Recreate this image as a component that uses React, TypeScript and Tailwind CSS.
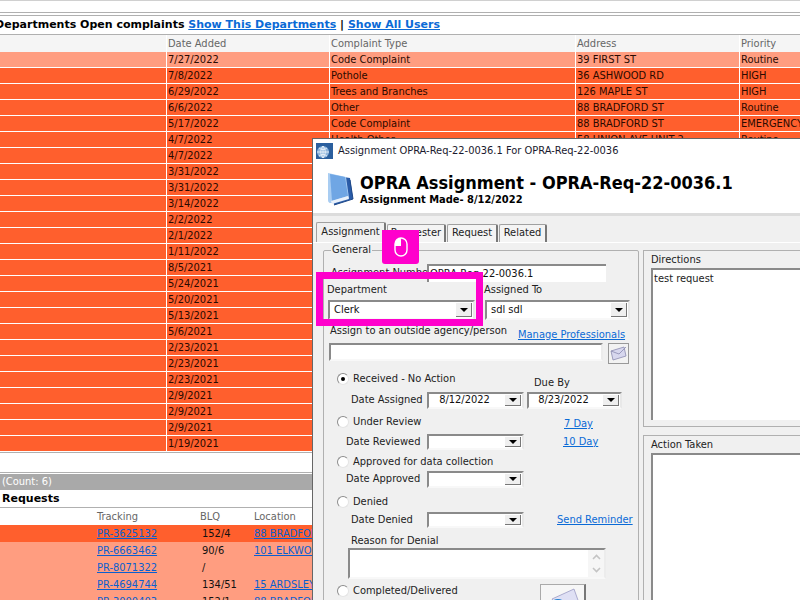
const complaints = [
  ["7/27/2022", "Code Complaint", "39 FIRST ST", "Routine"],
  ["7/8/2022", "Pothole", "36 ASHWOOD RD", "HIGH"],
  ["6/29/2022", "Trees and Branches", "126 MAPLE ST", "HIGH"],
  ["6/6/2022", "Other", "88 BRADFORD ST", "Routine"],
  ["5/17/2022", "Code Complaint", "88 BRADFORD ST", "EMERGENCY"],
  ["4/7/2022", "Health Other", "58 UNION AVE UNIT 2", "Routine"],
  ["4/7/2022", "", "", ""],
  ["3/31/2022", "", "", ""],
  ["3/31/2022", "", "", ""],
  ["3/14/2022", "", "", ""],
  ["2/2/2022", "", "", ""],
  ["2/1/2022", "", "", ""],
  ["1/11/2022", "", "", ""],
  ["8/5/2021", "", "", ""],
  ["5/24/2021", "", "", ""],
  ["5/20/2021", "", "", ""],
  ["5/13/2021", "", "", ""],
  ["5/6/2021", "", "", ""],
  ["2/23/2021", "", "", ""],
  ["2/23/2021", "", "", ""],
  ["2/23/2021", "", "", ""],
  ["2/9/2021", "", "", ""],
  ["2/9/2021", "", "", ""],
  ["2/9/2021", "", "", ""],
  ["1/19/2021", "", "", ""],
];

const requests = [
  ["PR-3625132", "152/4", "88 BRADFORD ST"],
  ["PR-6663462", "90/6", "101 ELKWOOD AVE"],
  ["PR-8071322", "/", ""],
  ["PR-4694744", "134/51", "15 ARDSLEY RD"],
  ["PR-3000403", "152/1", "88 BRADFORD ST"],
];

function Dropdown({ value, className, center }: { value?: string; className: string; center?: boolean }) {
  return (
    <div className={`flex items-stretch bg-white border-2 border-[#8a8a8a] border-r-[#e8e8e8] border-b-[#f8f8f8] ${className}`}>
      <div className={`flex-1 flex items-center text-[#111] ${center ? "justify-center pr-1" : "pl-1"}`}>{value}</div>
      <div className="w-[16px] m-[1px] bg-[#efefef] border-r border-b border-[#777] flex items-center justify-center">
        <div className="w-0 h-0 border-l-[4px] border-r-[4px] border-t-[4px] border-l-transparent border-r-transparent border-t-black" />
      </div>
    </div>
  );
}

function Radio({ checked }: { checked?: boolean }) {
  return (
    <div className="w-[12px] h-[12px] rounded-full bg-white border border-[#8c8c8c] border-b-[#e4e4e4] border-r-[#e4e4e4] flex items-center justify-center shrink-0">
      {checked && <div className="w-[4px] h-[4px] rounded-full bg-black" />}
    </div>
  );
}

function TextLink({ children }: { children: string }) {
  return <span className="text-[#0a6ad6] underline">{children}</span>;
}

function Tab({ label, active, width }: { label: string; active?: boolean; width: string }) {
  return (
    <div
      className={`${width} flex items-center justify-center border border-[#a0a0a0] border-r-2 border-r-[#777] border-b-0 rounded-t-[2px] ${
        active ? "h-[20px] bg-[#f0f0f0]" : "h-[18px] bg-[#f4f4f4]"
      }`}
    >
      {label}
    </div>
  );
}

function AssignmentWindow() {
  return (
    <div className="absolute left-[312px] top-[138px] w-[490px] h-[464px] flex flex-col bg-[#f0f0f0] border-l border-t border-[#666] text-[#222]">
      <div className="h-[24px] bg-white flex items-center gap-[5px] pl-[3px] shrink-0">
        <svg width="17" height="16" viewBox="0 0 17 16">
          <rect width="17" height="16" fill="#2b5f9e" />
          <circle cx="7" cy="9" r="6" fill="#8db4dc" />
          <path d="M1 9h12M7 3v12M3 5c3 2 5 2 8 0M3 13c3-2 5-2 8 0M7 3c-3 3-3 9 0 12M7 3c3 3 3 9 0 12" stroke="#fff" strokeWidth="0.7" fill="none" />
        </svg>
        <span className="text-[#1a1a2e]">Assignment OPRA-Req-22-0036.1 For OPRA-Req-22-0036</span>
      </div>
      <div className="h-[50px] bg-white flex items-start pl-[10px] pt-[9px] gap-[5px] shrink-0">
        <svg width="32" height="34" viewBox="0 0 32 34" className="shrink-0">
          <path d="M7 3l20 3 3 21-19 6z" fill="#2a5ca8" />
          <path d="M5 1l18 4 3 21-18 5c-3 0-3-2-3-4z" fill="#a9cdf2" />
          <path d="M7 2l15 3 3 19-16 5z" fill="#6fa6e4" />
          <path d="M8 29l17-5 1 3-17 5z" fill="#e9f1fb" />
          <path d="M27 8l3 19-19 6" stroke="#1d4788" strokeWidth="1" fill="none" />
        </svg>
        <div className="font-['DejaVu_Sans'] font-bold text-black">
          <div className="text-[18px] leading-[21px] whitespace-nowrap">OPRA Assignment - OPRA-Req-22-0036.1</div>
          <div className="text-[11px] leading-[13px]">Assignment Made- 8/12/2022</div>
        </div>
      </div>
      <div className="h-[3px] bg-[#dcdcdc] shrink-0" />
      <div className="h-[6px] shrink-0" />
      <div className="flex items-end h-[20px] ml-[3px] gap-[1px] shrink-0">
        <Tab label="Assignment" active width="w-[70px]" />
        <Tab label="Requester" width="w-[59px]" />
        <Tab label="Request" width="w-[51px]" />
        <Tab label="Related" width="w-[48px]" />
      </div>
      <div className="flex flex-1 min-h-0 border-t border-white pt-[7px] pl-[10px] gap-[4px] overflow-hidden">
        <div className="w-[316px] shrink-0 h-[460px] border border-[#b0b0b0] rounded-[2px] relative">
          <span className="absolute left-[7px] top-[-8px] bg-[#f0f0f0] px-[1px] leading-[14px]">General</span>
          <div className="h-[13px]" />
          <div className="h-[18px] flex items-center">
            <span className="ml-[7px] w-[96px] whitespace-nowrap">Assignment Number</span>
            <div className="w-[179px] h-[18px] bg-white border-l-2 border-t-2 border-[#8a8a8a] pl-[1px] leading-[16px] text-[#111]">OPRA-Req-22-0036.1</div>
          </div>
          <div className="h-[18px] flex items-end pb-[2px]">
            <span className="ml-[3px] w-[157px]">Department</span>
            <span>Assigned To</span>
          </div>
          <div className="h-[20px] flex gap-[10px] ml-[4px]">
            <Dropdown value="Clerk" className="w-[147px]" />
            <Dropdown value="sdl sdl" className="w-[145px]" />
          </div>
          <div className="h-[23px] flex items-center ml-[6px]">
            <span className="w-[188px] whitespace-nowrap pb-[1px]">Assign to an outside agency/person</span>
            <span className="mt-[7px]"><TextLink>Manage Professionals</TextLink></span>
          </div>
          <div className="h-[21px] flex gap-[5px] ml-[5px]">
            <div className="w-[274px] h-[18px] bg-white border-2 border-[#8a8a8a] border-r-[#ececec] border-b-[#f8f8f8]" />
            <div className="w-[21px] h-[21px] bg-[#f2f2f2] border border-[#999] flex items-center justify-center">
              <svg width="17" height="15" viewBox="0 0 17 15">
                <path d="M1 5L14 1l2 9-13 4z" fill="#d7d7ee" stroke="#8a8ab0" strokeWidth="0.8" />
                <path d="M1 5l8 3 7-7" fill="none" stroke="#8a8ab0" strokeWidth="0.8" />
              </svg>
            </div>
          </div>
          <div className="h-[7px]" />
          <div className="h-[16px] flex items-center ml-[13px] gap-[4px]">
            <Radio checked />
            <span className="w-[177px]">Received - No Action</span>
            <span className="mt-[8px]">Due By</span>
          </div>
          <div className="h-[5px]" />
          <div className="h-[17px] flex items-center">
            <span className="ml-[27px] w-[76px]">Date Assigned</span>
            <Dropdown value="8/12/2022" center className="w-[97px] h-[17px]" />
            <Dropdown value="8/23/2022" center className="w-[95px] h-[17px] ml-[3px]" />
          </div>
          <div className="h-[5px]" />
          <div className="h-[16px] flex items-center ml-[13px] gap-[4px]">
            <Radio />
            <span className="w-[207px]">Under Review</span>
            <span className="mt-[5px]"><TextLink>7 Day</TextLink></span>
          </div>
          <div className="h-[4px]" />
          <div className="h-[16px] flex items-center">
            <span className="ml-[22px] w-[81px]">Date Reviewed</span>
            <Dropdown className="w-[97px] h-[16px]" />
            <span className="ml-[39px]"><TextLink>10 Day</TextLink></span>
          </div>
          <div className="h-[4px]" />
          <div className="h-[16px] flex items-center ml-[13px] gap-[4px]">
            <Radio />
            <span>Approved for data collection</span>
          </div>
          <div className="h-[1px]" />
          <div className="h-[17px] flex items-center">
            <span className="ml-[22px] w-[81px]">Date Approved</span>
            <Dropdown className="w-[97px] h-[17px]" />
          </div>
          <div className="h-[6px]" />
          <div className="h-[16px] flex items-center ml-[13px] gap-[4px]">
            <Radio />
            <span>Denied</span>
          </div>
          <div className="h-[2px]" />
          <div className="h-[16px] flex items-center">
            <span className="ml-[27px] w-[76px]">Date Denied</span>
            <Dropdown className="w-[97px] h-[16px]" />
            <span className="ml-[33px]"><TextLink>Send Reminder</TextLink></span>
          </div>
          <div className="h-[6px] " />
          <div className="h-[14px] flex items-center ml-[27px]">Reason for Denial</div>
          <div className="ml-[24px] w-[258px] h-[31px] flex bg-white border-2 border-[#8a8a8a] border-r-[#ececec] border-b-[#f8f8f8]">
            <div className="flex-1" />
            <div className="w-[16px] flex flex-col items-center justify-between py-[4px] text-[#c4c4c4] bg-[#f6f6f6]">
              <svg width="9" height="6" viewBox="0 0 9 6"><path d="M1 5l3.5-3.5L8 5" fill="none" stroke="currentColor" strokeWidth="1.6" /></svg>
              <svg width="9" height="6" viewBox="0 0 9 6"><path d="M1 1l3.5 3.5L8 1" fill="none" stroke="currentColor" strokeWidth="1.6" /></svg>
            </div>
          </div>
          <div className="h-[5px]" />
          <div className="flex h-[26px] ml-[13px]">
            <div className="w-[203px] flex items-start gap-[4px] pt-[1px]">
              <Radio />
              <span className="leading-[12px]">Completed/Delivered</span>
            </div>
            <div className="w-[46px] h-[42px] bg-[#f6f6f6] border border-[#aaa] border-r-2 border-r-[#777] flex items-start justify-center pt-[2px] overflow-hidden">
              <svg width="34" height="26" viewBox="0 0 34 26">
                <path d="M6 12L28 2l5 14-18 10z" fill="#dfe0f4" stroke="#9a9ac4" strokeWidth="0.8" />
                <circle cx="12" cy="21" r="9" fill="#1f7fd0" />
                <path d="M7 19a6 5 0 0 1 10 0z" fill="#9fd2f5" />
              </svg>
            </div>
          </div>
          <div className="h-[18px] flex items-center -mt-[1px]">
            <span className="ml-[27px] w-[81px] whitespace-nowrap">Date Completed</span>
            <Dropdown className="w-[97px] h-[17px]" />
          </div>
        </div>
        <div className="flex-1 min-w-0 flex flex-col h-[460px] gap-[8px]">
          <div className="h-[177px] border border-[#b0b0b0] pl-[7px] pt-[2px] shrink-0">
            <div className="leading-[14px]">Directions</div>
            <div className="h-[152px] mt-[1px] bg-white border-l-2 border-t-2 border-[#8a8a8a] pl-[1px] leading-[17px]">test request</div>
          </div>
          <div className="flex-1 border border-[#b0b0b0] pl-[7px] pt-[2px]">
            <div className="leading-[14px]">Action Taken</div>
            <div className="h-[200px] mt-[1px] bg-white border-l-2 border-t-2 border-[#8a8a8a]" />
          </div>
        </div>
      </div>
    </div>
  );
}

function MouseHint() {
  return (
    <div className="absolute left-[382px] top-[230px] w-[37px] h-[34px] bg-[#ff00cc] rounded-b-[3px] flex items-center justify-center">
      <svg width="14" height="20" viewBox="0 0 14 20">
        <rect x="1" y="1" width="12" height="18" rx="6" fill="none" stroke="#fff" strokeWidth="1.4" />
        <path d="M7 1a6 6 0 0 0-6 6v2h6z" fill="#fff" />
      </svg>
    </div>
  );
}

export default function App() {
  return (
    <div className="relative w-[800px] h-[600px] overflow-hidden bg-white font-['DejaVu_Sans_Condensed','DejaVu_Sans',sans-serif] [font-stretch:condensed] text-[11px]">
      <div className="h-[1px] bg-[#d0d0d0]" />
      <div className="h-[11px]" />
      <div className="h-[1px] bg-[#b0b0b0]" />
      <div className="h-[2px]" />
      <div className="h-[1px] bg-[#b0b0b0]" />
      <div className="h-[18px] flex items-center justify-end w-[440px] font-['DejaVu_Sans'] font-bold text-[11px] whitespace-nowrap text-black [font-stretch:normal]">
        <span>ts, All Departments Open complaints&nbsp;</span>
        <span className="text-[#0a6ad6] underline">Show This Departments</span>
        <span>&nbsp;|&nbsp;</span>
        <span className="text-[#0a6ad6] underline">Show All Users</span>
      </div>
      <div className="h-[1px] bg-[#b0b0b0]" />
      <div className="grid grid-cols-[166px_163px_246px_164px_61px] h-[17px] bg-[#f5f5f5] text-[#666] leading-[17px]">
        <div />
        <div className="border-l border-white pl-[1px]">Date Added</div>
        <div className="border-l border-white pl-[1px]">Complaint Type</div>
        <div className="border-l border-white pl-[1px]">Address</div>
        <div className="border-l border-white pl-[1px]">Priority</div>
      </div>
      {complaints.map((row, i) => (
        <div
          key={i}
          className={`grid grid-cols-[166px_163px_246px_164px_61px] h-[16px] border-b border-white leading-[15px] text-[#2a0a00] whitespace-nowrap ${
            i === 0 ? "bg-[#ff9d80]" : "bg-[#ff5f2d]"
          }`}
        >
          <div />
          {row.map((cell, j) => (
            <div key={j} className="border-l border-white pl-[1px]">
              {cell}
            </div>
          ))}
        </div>
      ))}
      <div className="h-[1px] bg-[#b0b0b0]" />
      <div className="h-[19px]" />
      <div className="h-[1px] bg-[#b0b0b0]" />
      <div className="h-[1px]" />
      <div className="h-[16px] bg-[#a9a9a9] text-white pl-[2px] leading-[16px]">(Count: 6)</div>
      <div className="h-[17px] font-['DejaVu_Sans'] font-bold text-black pl-[2px] leading-[17px] [font-stretch:normal]">Requests</div>
      <div className="h-[1px] bg-[#b0b0b0]" />
      <div className="grid grid-cols-[97px_103px_54px_1fr] h-[17px] text-[#666] leading-[17px]">
        <div />
        <div>Tracking</div>
        <div>BLQ</div>
        <div>Location</div>
      </div>
      {requests.map((row, i) => (
        <div
          key={i}
          className={`grid grid-cols-[97px_103px_54px_1fr] h-[17px] leading-[17px] whitespace-nowrap ${
            i === 0 ? "bg-[#ff5f2d]" : "bg-[#ff9d80]"
          }`}
        >
          <div />
          <div className="text-[#0a5fd0] underline">{row[0]}</div>
          <div className="text-[#111] pl-[2px]">{row[1]}</div>
          <div className="text-[#0a5fd0] underline">{row[2]}</div>
        </div>
      ))}
      <AssignmentWindow />
      <div className="absolute left-[316px] top-[272px] w-[167px] h-[54px] border-[7px] border-[#ff00cc]" />
      <MouseHint />
    </div>
  );
}
